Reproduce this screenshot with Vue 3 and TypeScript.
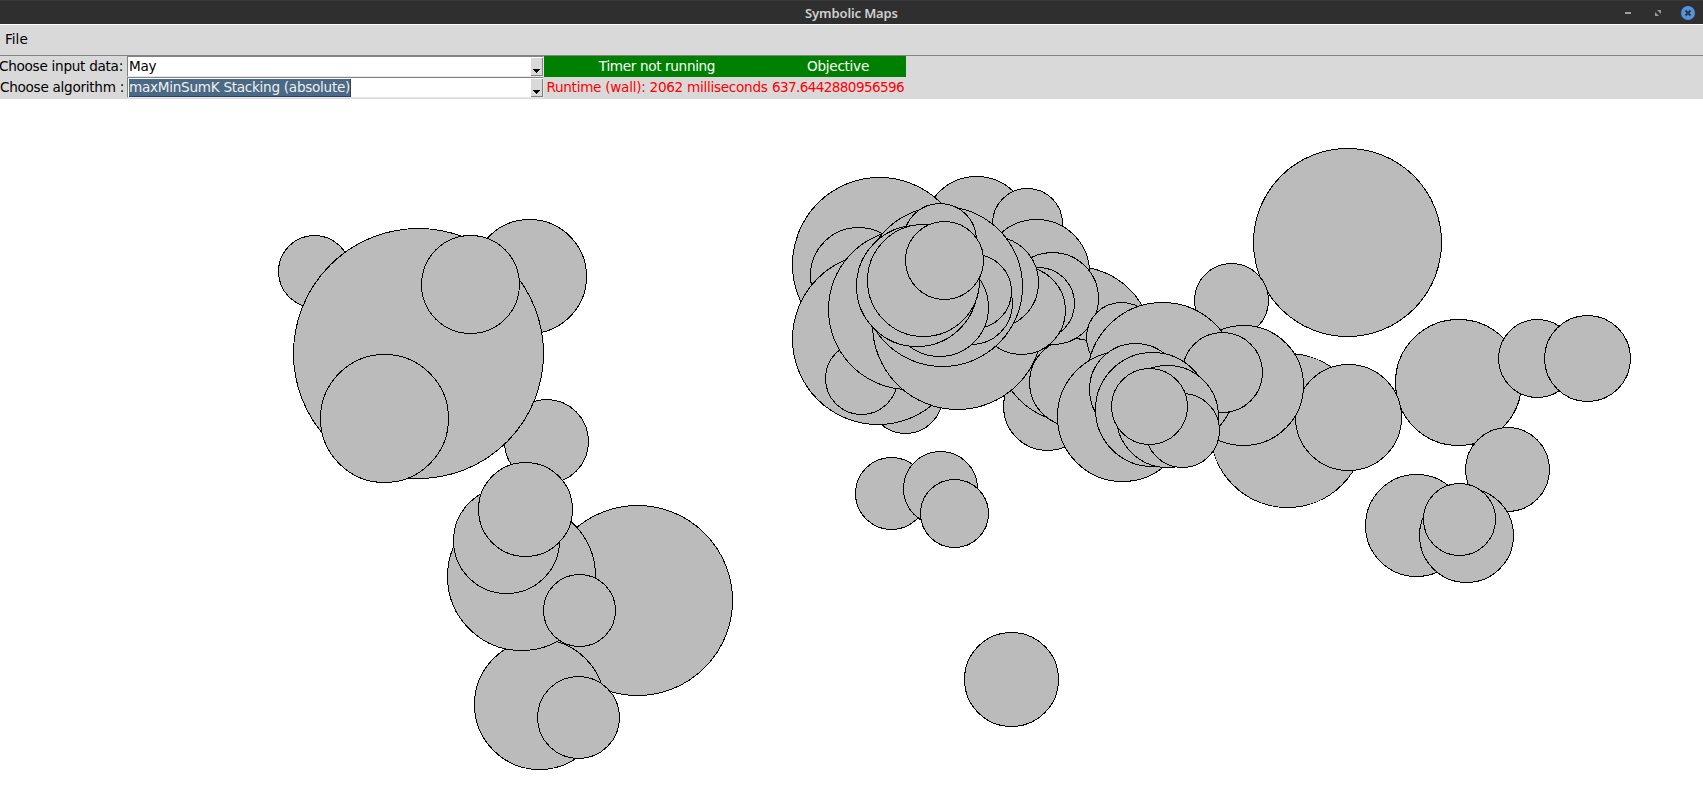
<script setup lang="ts">
type Disc = [cx: number, cy: number, r: number]

// Listed from the bottom of the stack to the top.
const discs: Disc[] = [
  // North America
  [314.5, 271.5, 36],
  [529.5, 276.5, 57],
  [546.5, 441.5, 42],
  [418.5, 353.5, 125],
  [470.5, 284.5, 49],
  [384.5, 418.5, 64],
  // South America
  [637.5, 600.5, 95],
  [539.5, 704.5, 65],
  [521.5, 576.5, 74],
  [506.5, 540.5, 53],
  [525.5, 509.5, 47],
  [579.5, 610.5, 36],
  [578.5, 717.5, 41],
  // Africa
  [891.5, 493.5, 36],
  [940.5, 488.5, 37],
  [954.5, 513.5, 34],
  [1011.5, 679.5, 47],
  // East Asia and Pacific
  [1458.5, 382.5, 63],
  [1537.5, 358.5, 39],
  [1587.5, 358.5, 43],
  [1507.5, 469.5, 42],
  [1416.5, 525.5, 51],
  [1466.5, 535.5, 47],
  [1459.5, 519.5, 36],
  [1347.5, 242.5, 94],
  [1231.5, 300.5, 37],
  // Middle East and eastern Europe
  [1047.5, 406.5, 44],
  [1074.5, 344.5, 78],
  [1073.5, 382.5, 44],
  [976.5, 229.5, 53],
  [1027.5, 223.5, 35],
  [1036.5, 272.5, 53],
  [1052.5, 298.5, 46],
  [1038.5, 303.5, 36],
  // Western and central Europe
  [879.5, 264.5, 87],
  [858.5, 275.5, 48],
  [905.5, 396.5, 37],
  [878, 339, 85.5],
  [861.5, 378.5, 36],
  [908.5, 309.5, 80],
  [957.5, 324.5, 85],
  [1021.5, 310.5, 44],
  [992.5, 282.5, 46],
  [942.5, 286.5, 80],
  [971.5, 303.5, 41],
  [974.5, 291.5, 37],
  [940, 240, 36.5],
  [939.5, 307.5, 49],
  [917, 286, 60.5],
  [923.5, 280.5, 56],
  [944.5, 260.5, 39],
  // Gulf and South Asia
  [1287.5, 430.5, 77],
  [1348.5, 417.5, 53],
  [1243.5, 385.5, 60],
  [1121.5, 337.5, 35],
  [1162.5, 377.5, 75],
  [1222.5, 372.5, 40],
  [1122.5, 416.5, 65],
  [1135.5, 389.5, 46],
  [1152.5, 409.5, 57],
  [1167.5, 416.5, 51],
  [1182.5, 430.5, 37],
  [1149.5, 406.5, 38],
]
const mapTop = 99
</script>

<template>
  <div class="window">
    <header class="titlebar">
      <span class="title">Symbolic Maps</span>
      <div class="controls">
        <svg width="6" height="2" viewBox="0 0 6 2"><path d="M0 0H6V2H0Z" fill="#a0a0a0" /></svg>
        <svg width="6" height="6" viewBox="0 0 6 6"><path d="M2 0H6V4ZM0 2L4 6H0Z" fill="#999" /></svg>
        <svg class="close" width="14" height="14" viewBox="0 0 14 14">
          <circle cx="7" cy="7" r="7" fill="#5294e2" />
          <path d="M4.5 4.5L9.5 9.5M9.5 4.5L4.5 9.5" stroke="#2f343f" stroke-width="1.8" />
        </svg>
      </div>
    </header>
    <nav class="menubar"><span class="file">File</span></nav>
    <section class="form">
      <div class="labels">
        <div class="label first">Choose input data:</div>
        <div class="label second">Choose algorithm :</div>
      </div>
      <div class="combos">
        <div class="combo">
          <span class="value month">May</span>
          <span class="drop"><svg width="7" height="5" viewBox="0 0 7 5" shape-rendering="crispEdges"><path d="M0 1H7V2H6V3H5V4H4V5H3V4H2V3H1V2H0Z" /></svg></span>
        </div>
        <div class="combo">
          <span class="value selected">maxMinSumK Stacking (absolute)</span>
          <span class="drop"><svg width="7" height="5" viewBox="0 0 7 5" shape-rendering="crispEdges"><path d="M0 1H7V2H6V3H5V4H4V5H3V4H2V3H1V2H0Z" /></svg></span>
        </div>
      </div>
      <div class="status">
        <div class="row green"><span class="timer">Timer not running</span><span class="objective">Objective</span></div>
        <div class="row red"><span class="runtime">Runtime (wall): 2062 milliseconds</span><span class="score">637.6442880956596</span></div>
      </div>
    </section>
    <svg class="map" width="1703" height="713" :viewBox="`0 ${mapTop} 1703 713`" shape-rendering="crispEdges">
      <circle v-for="([cx, cy, r], i) in discs" :key="i" :cx="cx" :cy="cy" :r="r" />
    </svg>
  </div>
</template>

<style>
body {
  margin: 0;
  background: #fff;
}
</style>

<style scoped>
.window {
  width: 1703px;
  height: 812px;
  overflow: hidden;
  background: #fff;
  font: 13.6px/20px "DejaVu Sans", sans-serif;
  letter-spacing: -0.28px;
  color: #000;
  white-space: nowrap;
}
.titlebar {
  box-sizing: border-box;
  height: 24px;
  border-top: 1px solid #3a3a3a;
  background: #2f2f2f;
  display: grid;
  grid-template-columns: 1fr auto 1fr;
  align-items: center;
}
.title {
  grid-column: 2;
  color: #d0d0d0;
  font: 600 13px/24px "Noto Sans", sans-serif;
  letter-spacing: -0.12px;
}
.controls {
  justify-self: end;
  display: flex;
  align-items: center;
  gap: 24px;
  padding-right: 8px;
}
.close {
  margin-left: -4px;
}
.menubar {
  box-sizing: border-box;
  height: 32px;
  border-top: 1px solid #fff;
  border-bottom: 1px solid #828282;
  background: #d9d9d9;
  padding: 3px 0 0 5px;
}
.file {
  line-height: 22px;
  letter-spacing: 0;
}
.form {
  display: flex;
  height: 43px;
  background: #d9d9d9;
}
.labels {
  width: 127px;
}
.label {
  height: 21px;
}
.first {
  margin-left: -1px;
}
.combos {
  width: 417px;
}
.combo {
  box-sizing: border-box;
  width: 417px;
  height: 21px;
  border: 1px solid #828282;
  border-right-color: #e6e6e6;
  border-bottom-color: #e6e6e6;
  background: #fff;
  display: flex;
  justify-content: space-between;
}
.value {
  line-height: 18px;
  padding: 0 1px;
  height: 19px;
}
.selected {
  box-sizing: border-box;
  width: 222px;
  margin-left: 1px;
  padding: 0;
  height: 18px;
  margin-top: 1px;
  line-height: 16px;
  background: #4a6984;
  color: #f0f0f0;
  border-right: 1px solid #2b4560;
  border-bottom: 1px solid #2b4560;
}
.drop {
  box-sizing: border-box;
  width: 12px;
  height: 18px;
  margin-top: 1px;
  background: #d9d9d9;
  border-right: 1px solid #828282;
  border-bottom: 1px solid #828282;
  display: flex;
  align-items: flex-end;
  justify-content: center;
  padding-bottom: 2px;
}
.status {
  width: 362px;
}
.row {
  height: 21px;
  display: flex;
}
.green {
  background: #008000;
  color: #fff;
}
.red {
  color: #f00;
}
.timer,
.runtime {
  width: 226px;
  text-align: center;
}
.timer {
  letter-spacing: -0.35px;
}
.objective,
.score {
  width: 136px;
  text-align: center;
}
.score {
  letter-spacing: -0.62px;
}
.map {
  display: block;
}
.map circle {
  fill: #bbb;
  stroke: #000;
  stroke-width: 1;
}
</style>
